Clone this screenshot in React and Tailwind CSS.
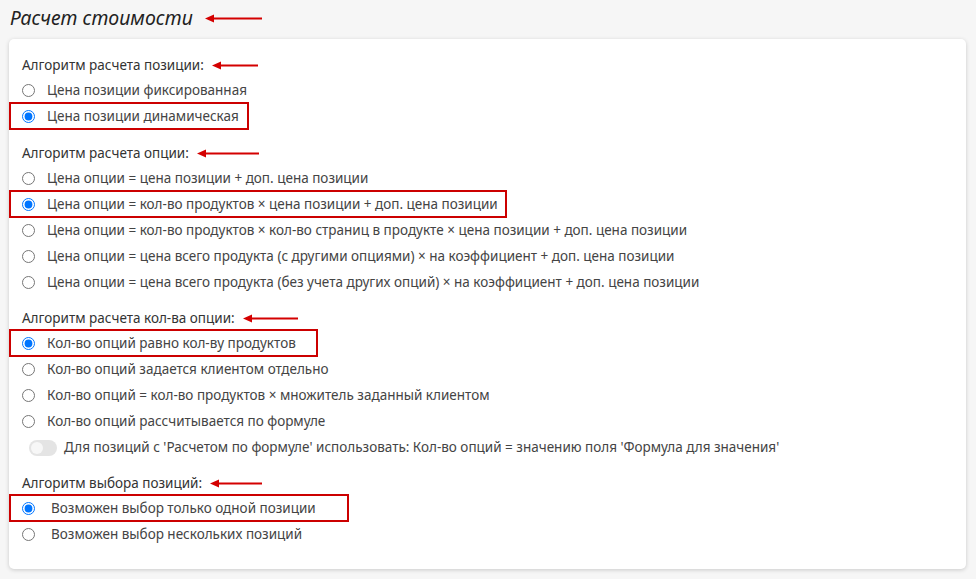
const FONT = { fontFamily: '"Noto Sans", "Open Sans", sans-serif' };

// ── Red annotation arrow ─────────────────────────────────────────────────────
const Arrow = ({ w = 56 }) => (
  <svg width={w} height="9" viewBox={`0 0 ${w} 9`} className="shrink-0">
    <path d={`M0 4.5 L9 0.5 L9 8.5 Z`} fill="#d40000" />
    <rect x="8" y="3.5" width={w - 8} height="2" fill="#d40000" />
  </svg>
);

function Radio({ checked }) {
  return (
    <input
      type="radio"
      checked={checked}
      readOnly
      className="m-0 w-[13px] h-[13px] shrink-0 accent-[#0075ff]"
    />
  );
}

function Option({ label, checked, boxed, textPad = "pl-[12px]" }) {
  if (boxed) {
    return (
      <div className="h-[26px] flex items-center">
        <div className="inline-flex items-center h-[28px] -ml-[13px] pl-[11px] border-2 border-[#cc0000] pr-[4px]" style={{ minWidth: boxed }}>
          <Radio checked={checked} />
          <span className={`${textPad} whitespace-nowrap`}>{label}</span>
        </div>
      </div>
    );
  }
  return (
    <div className="h-[26px] flex items-center">
      <Radio checked={checked} />
      <span className={`${textPad} whitespace-nowrap`}>{label}</span>
    </div>
  );
}

function Label({ children, arrow = 46 }) {
  return (
    <div className="h-[24px] flex items-center gap-[8px] text-[#333]">
      <span>{children}</span>
      <Arrow w={arrow} />
    </div>
  );
}

export default function App() {
  return (
    <div className="min-h-screen bg-[#f6f6f6] text-[13.5px] text-[#444]" style={FONT}>
      <div className="pl-[10px] pt-[4px] h-[39px] flex items-start">
        <div className="flex items-center gap-[12px] h-[28px]">
          <h1 className="text-[19.5px] italic text-[#222]">Расчет стоимости</h1>
          <Arrow w={57} />
        </div>
      </div>

      <div className="ml-[9px] w-[957px] h-[530px] bg-white rounded-[5px] shadow-[0_1px_4px_rgba(0,0,0,0.18)] pl-[13px] pt-[14px]">
        <Label arrow={46}>Алгоритм расчета позиции:</Label>
        <Option label="Цена позиции фиксированная" />
        <Option label="Цена позиции динамическая" checked boxed="240px" />

        <div className="h-[12px]" />
        <Label arrow={62}>Алгоритм расчета опции:</Label>
        <Option label="Цена опции = цена позиции + доп. цена позиции" />
        <Option label="Цена опции = кол-во продуктов × цена позиции + доп. цена позиции" checked boxed="498px" />
        <Option label="Цена опции = кол-во продуктов × кол-во страниц в продукте × цена позиции + доп. цена позиции" />
        <Option label="Цена опции = цена всего продукта (с другими опциями) × на коэффициент + доп. цена позиции" />
        <Option label="Цена опции = цена всего продукта (без учета других опций) × на коэффициент + доп. цена позиции" />

        <div className="h-[11px]" />
        <Label arrow={55}>Алгоритм расчета кол-ва опции:</Label>
        <Option label="Кол-во опций равно кол-ву продуктов" checked boxed="309px" />
        <Option label="Кол-во опций задается клиентом отдельно" />
        <Option label="Кол-во опций = кол-во продуктов × множитель заданный клиентом" />
        <Option label="Кол-во опций рассчитывается по формуле" />
        <div className="h-[27px] flex items-center pl-[7px]">
          <div className="w-[28px] h-[16px] rounded-full bg-[#e4e4e4] flex items-center pl-[2px]">
            <div className="w-[12px] h-[12px] rounded-full bg-[#f7f7f7]" />
          </div>
          <span className="pl-[7px] whitespace-nowrap">
            Для позиций с 'Расчетом по формуле' использовать: Кол-во опций = значению поля 'Формула для значения'
          </span>
        </div>

        <div className="h-[10px]" />
        <Label arrow={52}>Алгоритм выбора позиций:</Label>
        <Option label="Возможен выбор только одной позиции" checked boxed="340px" textPad="pl-[16px]" />
        <Option label="Возможен выбор нескольких позиций" textPad="pl-[16px]" />
      </div>
    </div>
  );
}
